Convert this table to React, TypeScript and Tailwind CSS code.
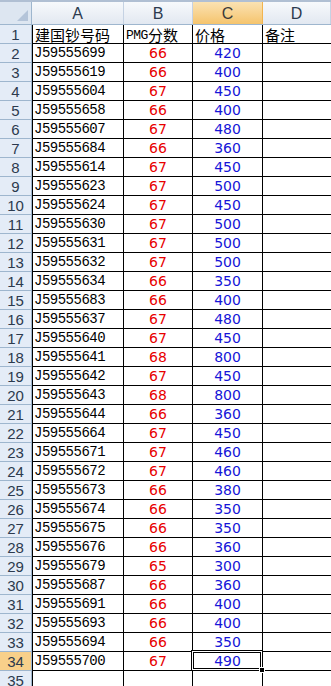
const rows: [string, string, string][] = [
  ["J59555699", "66", "420"],
  ["J59555619", "66", "400"],
  ["J59555604", "67", "450"],
  ["J59555658", "66", "400"],
  ["J59555607", "67", "480"],
  ["J59555684", "66", "360"],
  ["J59555614", "67", "450"],
  ["J59555623", "67", "500"],
  ["J59555624", "67", "450"],
  ["J59555630", "67", "500"],
  ["J59555631", "67", "500"],
  ["J59555632", "67", "500"],
  ["J59555634", "66", "350"],
  ["J59555683", "66", "400"],
  ["J59555637", "67", "480"],
  ["J59555640", "67", "450"],
  ["J59555641", "68", "800"],
  ["J59555642", "67", "450"],
  ["J59555643", "68", "800"],
  ["J59555644", "66", "360"],
  ["J59555664", "67", "450"],
  ["J59555671", "67", "460"],
  ["J59555672", "67", "460"],
  ["J59555673", "66", "380"],
  ["J59555674", "66", "350"],
  ["J59555675", "66", "350"],
  ["J59555676", "66", "360"],
  ["J59555679", "65", "300"],
  ["J59555687", "66", "360"],
  ["J59555691", "66", "400"],
  ["J59555693", "66", "400"],
  ["J59555694", "66", "350"],
  ["J59555700", "67", "490"],
];

const cjk = "font-['SimSun','Noto_Sans_CJK_SC',sans-serif]";
const num = "font-['DejaVu_Sans',sans-serif]";
const hdr = "font-['Liberation_Sans','Noto_Sans_CJK_SC',sans-serif]";

function RowHead({ n, active }: { n: number; active?: boolean }) {
  return (
    <div
      className={`flex h-full w-[32px] shrink-0 items-end justify-center border-b border-r border-b-[#9eb6ce] border-r-[#9eb6ce] pb-[1px] text-[15px] leading-none text-[#2c3a4e] ${hdr} ${
        active ? "bg-[#f8d08a]" : "bg-[#e4ecf7]"
      }`}
    >
      {n}
    </div>
  );
}

export default function App() {
  return (
    <div className="relative h-[686px] w-[331px] overflow-hidden bg-white">
      <div className="h-[2px] bg-[#b0bfd3]" />
      {/* column headers */}
      <div className="flex h-[23px] border-b border-[#9eb6ce]">
        <div className="relative w-[32px] shrink-0 border-r border-[#9eb6ce] bg-[#dde6f1]">
          <div className="absolute bottom-[3px] right-[3px] h-0 w-0 border-b-[11px] border-l-[11px] border-b-[#b4c4d9] border-l-transparent" />
        </div>
        {[
          ["A", "w-[92px]"],
          ["B", "w-[69px]"],
          ["C", "w-[70px]"],
          ["D", "flex-1"],
        ].map(([l, w]) => (
          <div
            key={l}
            className={`flex items-center justify-center border-r pt-[1px] text-[16px] leading-none ${hdr} ${w} ${
              l === "C"
                ? "border-[#f2b44f] bg-gradient-to-b from-[#fae2b2] to-[#f5c46c] text-[#3a3a3a]"
                : "border-[#c5d2e3] bg-gradient-to-b from-[#f7f9fc] to-[#e2e8f1] text-[#2c3a4e]"
            }`}
          >
            {l}
          </div>
        ))}
      </div>

      {/* header row 1 */}
      <div className="flex h-[19px]">
        <RowHead n={1} />
        <div className={`flex w-[92px] items-end border-b border-l border-r border-black pb-[1px] pl-[2px] text-[15px] leading-none text-black ${cjk}`}>
          建国钞号码
        </div>
        <div className={`flex w-[69px] items-end border-b border-r border-black pb-[1px] pl-[2px] text-[15px] leading-none text-black ${cjk}`}>
          <span className="font-['Liberation_Mono',monospace] text-[13px] tracking-[-0.5px]">PMG</span>分数
        </div>
        <div className={`flex w-[70px] items-end border-b border-r border-black pb-[1px] pl-[2px] text-[15px] leading-none text-black ${cjk}`}>
          价格
        </div>
        <div className={`flex flex-1 items-end border-b border-black pb-[1px] pl-[2px] text-[15px] leading-none text-black ${cjk}`}>
          备注
        </div>
      </div>

      {rows.map(([id, score, price], i) => (
        <div key={id} className="flex h-[19px]">
          <RowHead n={i + 2} active={i === rows.length - 1} />
          <div className="flex w-[92px] items-end border-b border-l border-r border-black pb-[2px] pl-[1px] font-['Liberation_Mono',monospace] text-[14px] leading-none tracking-[-0.5px] text-black">
            {id}
          </div>
          <div className={`flex w-[69px] items-end justify-center border-b border-r border-black pb-[2px] text-[14px] leading-none text-[#e80000] ${num}`}>
            {score}
          </div>
          <div className={`flex w-[70px] items-end justify-center border-b border-r border-black pb-[2px] text-[14px] leading-none text-[#1515d8] ${num}`}>
            {price}
          </div>
          <div className="flex-1 border-b border-black" />
        </div>
      ))}

      {/* row 35 */}
      <div className="flex h-[19px]">
        <RowHead n={35} />
        <div className="w-[92px] border-l border-r border-black" />
        <div className="w-[69px] border-r border-black" />
        <div className="w-[70px] border-r border-black" />
        <div className="flex-1" />
      </div>

      {/* active cell C34 */}
      <div className="pointer-events-none absolute left-[191px] top-[650px] h-[21px] w-[72px] border border-black shadow-[inset_0_0_0_1px_white,inset_0_0_0_2px_black]" />
      <div className="pointer-events-none absolute left-[259px] top-[667px] h-[6px] w-[6px] border border-white bg-black" />
    </div>
  );
}
